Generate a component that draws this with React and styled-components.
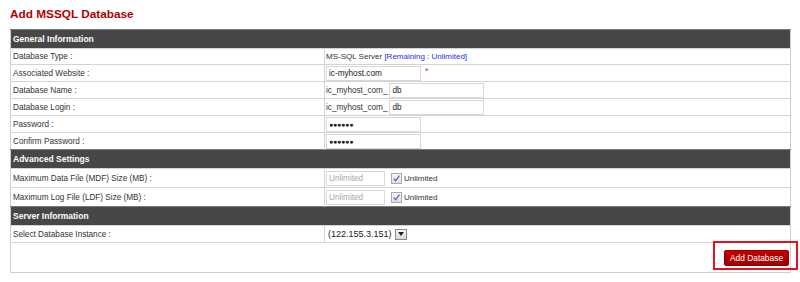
import styled, { createGlobalStyle } from "styled-components";

const Global = createGlobalStyle`
  html, body { margin: 0; padding: 0; background: #fff; }
  body { font-family: "Liberation Sans", Arial, sans-serif; font-size: 8.2px; color: #333; }
`;

const Page = styled.div`
  position: relative;
  padding: 8px 10px 0 10px;
  width: 780px;
`;

const Title = styled.h1`
  margin: 0 0 8px 0;
  font-size: 11.8px;
  line-height: 13px;
  font-weight: bold;
  color: #b30000;
`;

const Table = styled.table`
  width: 781px;
  border-collapse: collapse;
  border: 1px solid #cfcfcf;
  td, th { padding: 0; }
`;

const HeadCell = styled.th`
  background: #474747;
  border-top: 1px solid #7a7a7a;
  color: #fff;
  font-weight: bold;
  font-size: 8.5px;
  text-align: left;
  height: 18px;
  padding: 0 0 0 2px !important;
`;

const Row = styled.tr`
  height: ${(p) => p.$h || 17}px;
  td { border-top: 1px solid #d4d4d4; }
`;

const Label = styled.td`
  width: 311px;
  padding-left: 2px !important;
  border-right: 1px solid #d4d4d4;
  color: #333;
  vertical-align: middle;
`;

const Value = styled.td`
  padding-left: 1px !important;
  vertical-align: middle;
  font-size: 8px;
`;

const Inline = styled.div`
  display: flex;
  align-items: center;
`;

const Field = styled.div`
  box-sizing: border-box;
  width: ${(p) => p.$w}px;
  height: 15px;
  border: 1px solid #d8d8d8;
  padding: 0 2px;
  display: flex;
  align-items: center;
  color: ${(p) => (p.$muted ? "#a8a8a8" : "#222")};
  font-size: ${(p) => (p.$dots ? "7px" : "8.2px")};
  letter-spacing: ${(p) => (p.$dots ? "-0.2px" : "0")};
`;

const Prefix = styled.span`
  margin-right: 2px;
  color: #333;
  font-size: 8.2px;
`;

const Star = styled.span`
  color: #e03030;
  margin-left: 4px;
  font-size: 9px;
  position: relative;
  top: -2px;
`;

const Remaining = styled.span`
  color: #2a2af0;
`;

const CheckBox = styled.span`
  box-sizing: border-box;
  width: 11px;
  height: 11px;
  border: 1px solid #a8a8a8;
  background: linear-gradient(#f6f6f6, #e0e0e0);
  display: inline-flex;
  align-items: center;
  justify-content: center;
  margin: 0 2px 0 6px;
`;

const SelectBox = styled.div`
  display: flex;
  align-items: center;
  padding-left: 2px;
  gap: 3px;
  color: #222;
  font-size: 9px;
`;

const DropBtn = styled.span`
  box-sizing: border-box;
  width: 12px;
  height: 11px;
  border: 1px solid #8a8a8a;
  background: linear-gradient(#fafafa, #d8d8d8);
  display: inline-flex;
  align-items: center;
  justify-content: center;
`;

const ActionCell = styled.td`
  height: 29px;
  text-align: right;
  padding-right: 1px !important;
  vertical-align: middle;
  border-top: 1px solid #d4d4d4;
`;

const Button = styled.button`
  font-family: "Liberation Sans", Arial, sans-serif;
  font-size: 8.4px;
  white-space: nowrap;
  color: #fff;
  height: 16px;
  width: 65px;
  padding: 0;
  border: 1px solid #8c0000;
  border-radius: 2px;
  background: linear-gradient(#c40000, #a00000);
`;

const Highlight = styled.div`
  position: absolute;
  left: 713px;
  top: 241px;
  width: 81px;
  height: 25px;
  border: 2px solid #e8101a;
  pointer-events: none;
`;

const Check = () => (
  <svg width="9" height="9" viewBox="0 0 9 9">
    <path d="M1.8 4.6 L3.6 6.8 L7.4 1.6" fill="none" stroke="#4a62c0" strokeWidth="1.3" />
  </svg>
);

const Arrow = () => (
  <svg width="6" height="4" viewBox="0 0 6 4">
    <path d="M0 0 H6 L3 4 Z" fill="#222" />
  </svg>
);

const Section = ({ children }) => (
  <tr>
    <HeadCell colSpan={2}>{children}</HeadCell>
  </tr>
);

export default function App() {
  return (
    <>
      <Global />
      <Page>
        <Title>Add MSSQL Database</Title>
        <Table>
          <tbody>
            <Section>General Information</Section>
            <Row $h={16}>
              <Label>Database Type :</Label>
              <Value>
                MS-SQL Server <Remaining>[Remaining : Unlimited]</Remaining>
              </Value>
            </Row>
            <Row>
              <Label>Associated Website :</Label>
              <Value>
                <Inline>
                  <Field $w={95}>ic-myhost.com</Field>
                  <Star>*</Star>
                </Inline>
              </Value>
            </Row>
            <Row>
              <Label>Database Name :</Label>
              <Value>
                <Inline>
                  <Prefix>ic_myhost_com_</Prefix>
                  <Field $w={95}>db</Field>
                </Inline>
              </Value>
            </Row>
            <Row>
              <Label>Database Login :</Label>
              <Value>
                <Inline>
                  <Prefix>ic_myhost_com_</Prefix>
                  <Field $w={95}>db</Field>
                </Inline>
              </Value>
            </Row>
            <Row>
              <Label>Password :</Label>
              <Value>
                <Field $w={95} $dots>●●●●●●</Field>
              </Value>
            </Row>
            <Row>
              <Label>Confirm Password :</Label>
              <Value>
                <Field $w={95} $dots>●●●●●●</Field>
              </Value>
            </Row>
            <Section>Advanced Settings</Section>
            <Row $h={19}>
              <Label>Maximum Data File (MDF) Size (MB) :</Label>
              <Value>
                <Inline>
                  <Field $w={59} $muted>Unlimited</Field>
                  <CheckBox><Check /></CheckBox>
                  Unlimited
                </Inline>
              </Value>
            </Row>
            <Row $h={19}>
              <Label>Maximum Log File (LDF) Size (MB) :</Label>
              <Value>
                <Inline>
                  <Field $w={59} $muted>Unlimited</Field>
                  <CheckBox><Check /></CheckBox>
                  Unlimited
                </Inline>
              </Value>
            </Row>
            <Section>Server Information</Section>
            <Row>
              <Label>Select Database Instance :</Label>
              <Value>
                <SelectBox>
                  (122.155.3.151)
                  <DropBtn><Arrow /></DropBtn>
                </SelectBox>
              </Value>
            </Row>
            <tr>
              <ActionCell colSpan={2}>
                <Button>Add Database</Button>
              </ActionCell>
            </tr>
          </tbody>
        </Table>
        <Highlight />
      </Page>
    </>
  );
}
